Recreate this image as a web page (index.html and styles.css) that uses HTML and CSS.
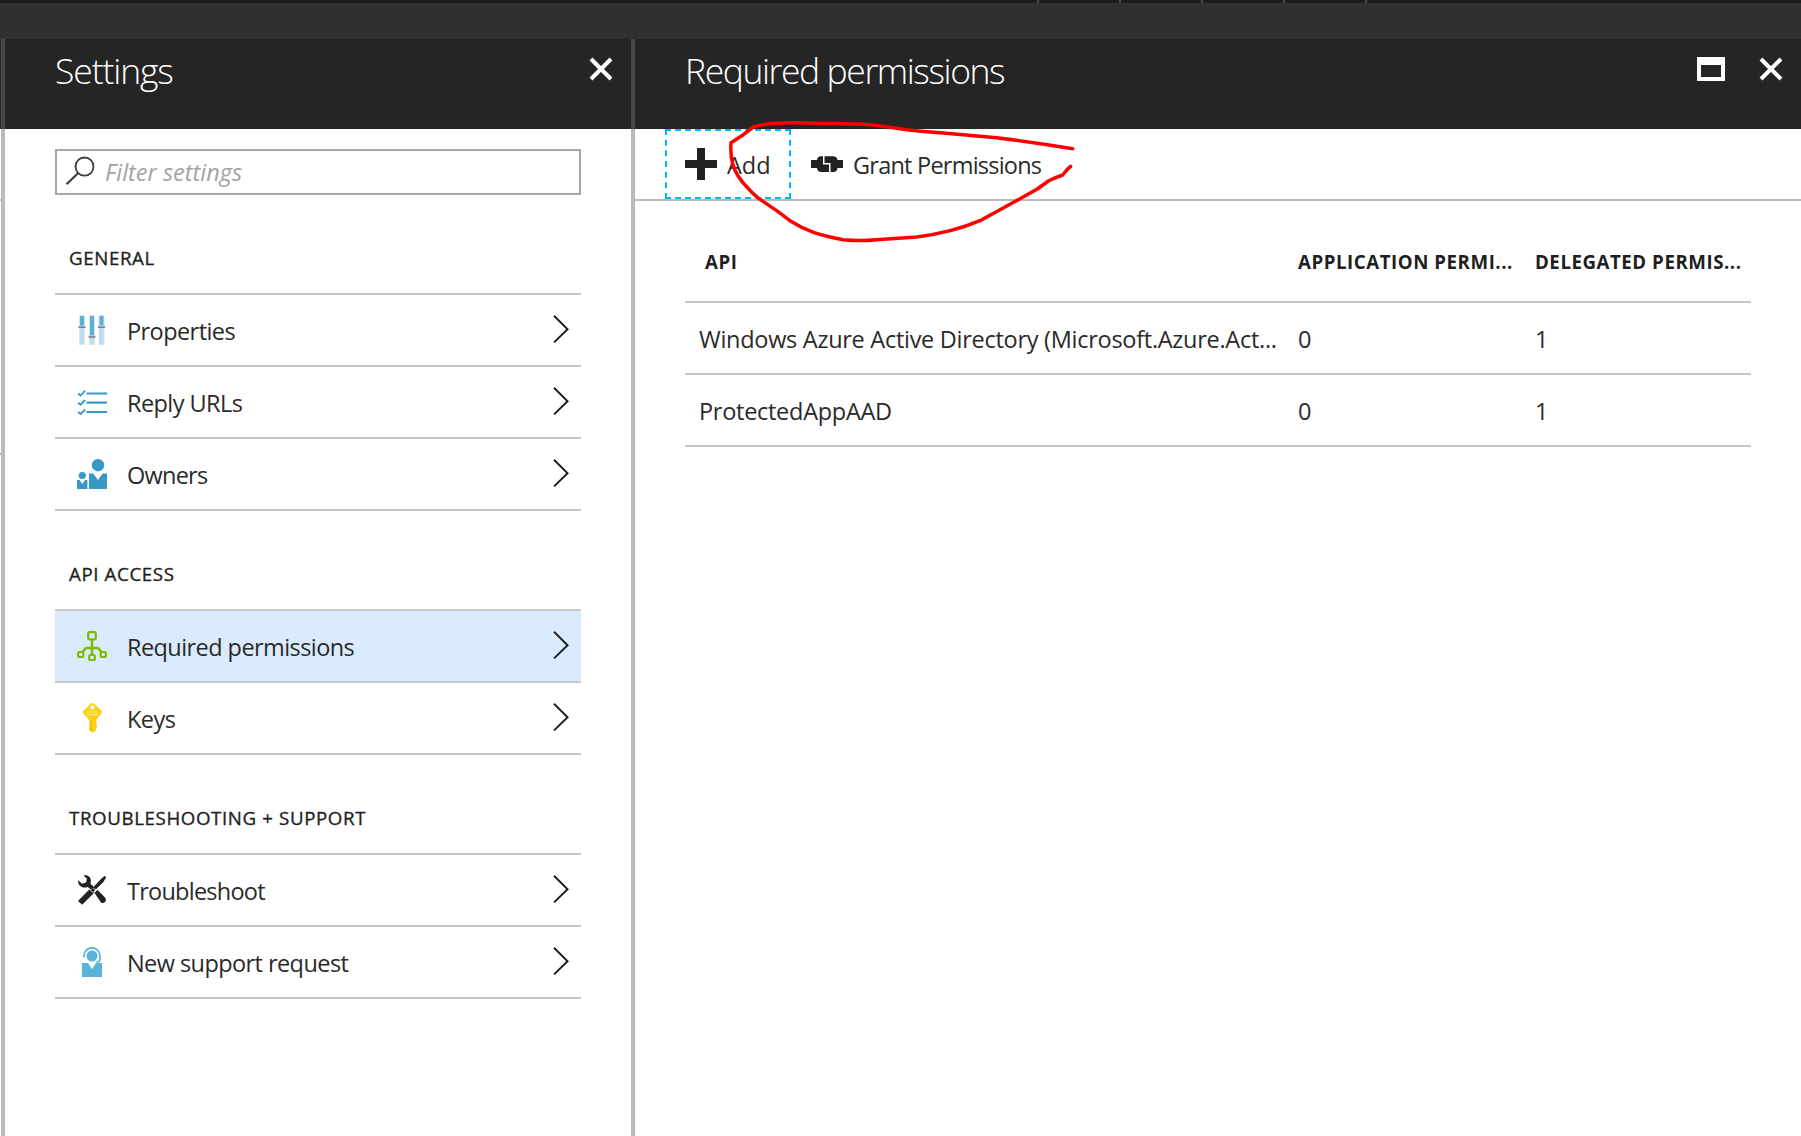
FILE: index.html
```
<!DOCTYPE html>
<html lang="en">
<head>
<meta charset="utf-8">
<title>Required permissions</title>
<link rel="stylesheet" href="styles.css">
</head>
<body>
<svg class="defs" width="0" height="0" aria-hidden="true">
  <symbol id="close" viewBox="0 0 24 24"><path d="M2 2 22 22M22 2 2 22" fill="none" stroke="#fff" stroke-width="4"/></symbol>
  <symbol id="chevron" viewBox="0 0 16 28"><path d="M1 .8 14.6 14.2 1 27.4" fill="none" stroke="#1e1e1e" stroke-width="1.9"/></symbol>
</svg>
<div class="topbar"><i></i><i></i><i></i><i></i><i></i></div>
<div class="breadcrumb"></div>
<main class="blades">
  <div class="previous"><div class="previous-head"></div><div class="previous-a"></div><div class="previous-b"></div></div>
  <section class="blade settings">
    <header class="head"><h1>Settings</h1><svg class="close" width="24" height="24"><use href="#close"/></svg></header>
    <div class="body">
      <div class="search">
        <svg width="30" height="36" viewBox="0 0 30 36"><ellipse cx="19.5" cy="11.6" rx="9" ry="9.1" fill="none" stroke="#3c3c3c" stroke-width="1.8"/><path d="M13 18.2 1.5 29.3" stroke="#3c3c3c" stroke-width="2.2"/></svg>
        <span>Filter settings</span>
      </div>
      <h2>GENERAL</h2>
      <ul>
        <li>
          <svg class="icon" viewBox="0 0 30 30"><g fill="#e0e2e3"><path d="M2 0h6v30H2zM12 0h6v30h-6zM21.500 0h6v30h-6z"/></g><path fill="#b9e0f2" d="M3 12h4v17H3zM13 22h4v7h-4zM22.500 12h4v17h-4z"/><path fill="#55b2d9" d="M3 1h4v10H3zM13 1h4v20h-4zM22.500 1h4v10h-4z"/><path fill="#d2d2d2" d="M1.500 10.500h7v1H1.500zM11.500 20.300h7v1h-7zM21 10.500h7v1h-7z"/><path fill="#7c7c7c" d="M1.500 11.500h7v1.500H1.500zM11.500 21.300h7v1.500h-7zM21 11.500h7v1.500h-7z"/></svg>
          <span>Properties</span><svg class="chevron"><use href="#chevron"/></svg></li>
        <li>
          <svg class="icon" viewBox="0 0 30 30"><path d="M9.500 6.500H30M9.500 15.700H30M9.500 25H30" stroke="#3999c6" stroke-width="2.200"/><path d="M1 6.500 3.600 8.500 8.200 3.700M1 15.700 3.600 17.700 8.200 13M1 25 3.600 27 8.200 22.300" fill="none" stroke="#3999c6" stroke-width="1.800"/></svg>
          <span>Reply URLs</span><svg class="chevron"><use href="#chevron"/></svg></li>
        <li>
          <svg class="icon" viewBox="0 0 30 30"><g fill="#3999c6"><circle cx="21" cy="6.200" r="6.200"/><circle cx="5.300" cy="16.500" r="3.600"/><path d="M12 14.500h4.200L21 21l4.600-6.500H30V30H12zM0 21h2.600l2.700 4 2.700-4h2.400v9H0z"/></g></svg>
          <span class="tight">Owners</span><svg class="chevron"><use href="#chevron"/></svg></li>
      </ul>
      <h2>API ACCESS</h2>
      <ul>
        <li class="selected">
          <svg class="icon" viewBox="0 0 30 30" fill="none" stroke="#7fba00" stroke-width="2.2"><rect x="11.200" y="1.100" width="7.600" height="7.200" rx="1"/><rect x="1.100" y="21" width="5.300" height="5" rx="1"/><rect x="12.200" y="24" width="5.600" height="5" rx="1"/><rect x="23.600" y="21" width="5.300" height="5" rx="1"/><path stroke-width="2.500" d="M15 8v16M5 21.500 9 17h12l4 4.500"/></svg>
          <span>Required permissions</span><svg class="chevron"><use href="#chevron"/></svg></li>
        <li>
          <svg class="icon" viewBox="0 0 30 30"><path fill="#fcd116" fill-rule="evenodd" d="M13.700.8Q15.500-.6 17.300.8L24.300 7.600Q25.500 9 24.300 10.400L20.300 15.600 19.200 17.300V19l1 1-1 1.200 1 1-1 1.200 1 1-1 1.200V27L15.500 30 12.300 27V17.300L6.600 10.700Q5 9 6.600 7.600ZM15.500 2.200a2.100 2.100 0 1 0 .01 0Z"/><path stroke="#fde98c" stroke-width="1.200" d="M10 9h11M10 11.600h11"/><path stroke="#f2b100" stroke-width="1.200" d="M14 18v9.500"/></svg>
          <span>Keys</span><svg class="chevron"><use href="#chevron"/></svg></li>
      </ul>
      <h2>TROUBLESHOOTING + SUPPORT</h2>
      <ul>
        <li>
          <svg class="icon" viewBox="0 0 30 30"><g fill="#222"><path d="M27.700.8 29.200 2.400 26.200 7.200 16.600 16.600 17 17.900 5.200 29.700 1 25.900 12.300 14.600 14 14.700 23.700 4.300Z"/><path d="M6.400.5C11.500-.9 15.400 3.200 13.400 8.600L17.300 12.500 13.600 14.200 10.700 11.900C5.500 14 .4 10.500 1.300 5.300L5 8.700 9 7.500 10 3.700ZM17.300 17.600 20.300 14.800 28 22.500C30.600 25.500 27 29.700 24 27.500Z"/></g><path stroke="#fff" stroke-width=".8" fill="none" d="M12.500 14.300 16.800 18.300M16.300 13.300 19.700 15.200 18 17"/></svg>
          <span class="tight">Troubleshoot</span><svg class="chevron"><use href="#chevron"/></svg></li>
        <li>
          <svg class="icon" viewBox="0 0 30 30"><g fill="#59b4d9"><circle cx="15" cy="9" r="5.500"/><path d="M5 16h6l4 6 4-6h6v14H5z"/></g><path d="M6.900 10.500V8.500a8 7.700 0 0 1 16 0V13q0 2-3.500 2" fill="none" stroke="#59b4d9" stroke-width="1.700"/></svg>
          <span>New support request</span><svg class="chevron"><use href="#chevron"/></svg></li>
      </ul>
    </div>
  </section>
  <section class="blade permissions">
    <header class="head"><h1>Required permissions</h1>
      <svg class="maximize" width="28" height="24"><path fill="#fff" fill-rule="evenodd" d="M0 0h28v24H0zM4 8v12h20V8z"/></svg>
      <svg class="close" width="24" height="24"><use href="#close"/></svg></header>
    <div class="toolbar">
      <div class="tool add"><svg width="32" height="32"><path fill="#222" d="M12 0h8v12h12v8H20v12h-8V20H0v-8h12z"/></svg><span>Add</span></div>
      <div class="tool grant"><svg width="32" height="16" viewBox="0 0 32 16"><path fill="#222" d="M0 4h6Q6.500.3 9.500.3H12V8.500H18V16H10Q6.500 16 6 12H0zM13.500.3H22Q26 .3 26.500 4H32v8h-5.500Q26 16 22.500 16H19.500V7H13.500z"/></svg><span>Grant Permissions</span></div>
    </div>
    <div class="grid">
      <div class="row titles"><span>API</span><span>APPLICATION PERMI...</span><span>DELEGATED PERMIS...</span></div>
      <div class="row"><span>Windows Azure Active Directory (Microsoft.Azure.Act...</span><span>0</span><span>1</span></div>
      <div class="row"><span>ProtectedAppAAD</span><span>0</span><span>1</span></div>
    </div>
  </section>
</main>
<svg class="scribble" width="360" height="130" viewBox="270 345 1080 390"><path d="M1328 446Q1210 427 1100 413L940 399Q860 394 800 385T700 373L560 370Q420 364 370 381L340 404 303 428C300 475 306 515 350 560Q370 585 400 605L440 632 480 662C530 694 570 706 640 719Q690 724 740 719L860 711Q965 698 1050 662L1140 613 1222 567 1255 543Q1275 533 1298 525L1312 508 1322 499" fill="none" stroke="#f00" stroke-width="10.500" stroke-linejoin="round" stroke-linecap="round"/></svg>
</body>
</html>
```
FILE: styles.css
```
* { box-sizing: border-box; }
body { margin: 0; height: 1136px; overflow: hidden; background: #fff; color: #2a2a2a; font: 23.5px/32px "Open Sans", "Noto Sans", sans-serif; display: flex; flex-direction: column; position: relative; }
h1, h2, ul { margin: 0; padding: 0; font-weight: inherit; }
.defs { position: absolute; }
.topbar { height: 3px; background: #1c1c1c; display: flex; gap: 80px; padding-left: 1037px; }
.topbar i { width: 2px; background: #484848; }
.breadcrumb { height: 36px; background: #303030; }
.blades { flex: 1; display: flex; }
.previous { width: 1px; display: flex; flex-direction: column; }
.previous-head { height: 90px; background: #252525; }
.previous-a { height: 72px; border-bottom: 2px solid #bbb; }
.previous-b { height: 254px; border-bottom: 2px solid #bbb; }
.blade { border-left: 4px solid #bababa; border-image: linear-gradient(#484848 90px, #bababa 90px) 0 0 0 4; }
.settings { width: 630px; }
.permissions { flex: 1; }
.head { height: 90px; background: #252525; color: #fff; display: flex; align-items: flex-start; padding: 18px 18px 0 50px; }
.head h1 { flex: 1; font-size: 35.5px; line-height: 27px; font-weight: 300; white-space: nowrap; letter-spacing: -1.42px; }
.settings .head h1 { letter-spacing: -1.1px; }
.body { padding: 20px 50px 0; }
.search { height: 46px; border: 2px solid #a6a6a6; display: flex; align-items: center; padding-left: 8px; color: #a3a3a3; font-style: italic; margin-bottom: 47px; }
.search svg { margin-top: 2px; }
.search span { margin: 0 0 1px 10px; }
h2 { height: 51px; font-size: 18.7px; line-height: 32px; color: #1f1f1f; padding-left: 14px; white-space: nowrap; letter-spacing: .62px; -webkit-text-stroke: .35px #1f1f1f; }
ul { list-style: none; border-top: 2px solid #c8c8c8; margin-bottom: 47px; }
li { height: 72px; border-bottom: 2px solid #c8c8c8; display: flex; align-items: center; padding: 0 12px 0 22px; }
li span { flex: 1; padding: 2px 0 0 20px; white-space: nowrap; letter-spacing: -.57px; }
li .tight { letter-spacing: -.75px; }
.selected { background: #d9ebfd; }
.icon { width: 30px; height: 30px; }
.chevron { width: 16px; height: 28px; margin-bottom: 2px; }
.maximize { margin-right: 34px; }
.toolbar { height: 72px; border-bottom: 2px solid #bbb; padding-left: 30px; display: flex; }
.tool { display: flex; align-items: center; padding: 0 20px; }
.tool span { padding-top: 2px; margin-left: 10px; white-space: nowrap; }
.grant span { letter-spacing: -.77px; }
.add { width: 126px; height: 70px; border: 2px dashed #00bcf2; padding: 0 18px; }
.add svg { flex: none; }
.grid { padding: 28px 50px 0; }
.row { height: 72px; border-bottom: 2px solid #c8c8c8; display: grid; grid-template-columns: 599px 237px 1fr; align-items: center; padding: 2px 0 0 14px; white-space: nowrap; letter-spacing: -.28px; }
.row.titles { height: 74px; padding: 0 0 7px 14px; font-size: 18.7px; font-weight: 700; color: #1f1f1f; letter-spacing: .54px; }
.titles span:first-child { padding-left: 6px; }
.scribble { position: absolute; left: 720px; top: 115px; }
```
